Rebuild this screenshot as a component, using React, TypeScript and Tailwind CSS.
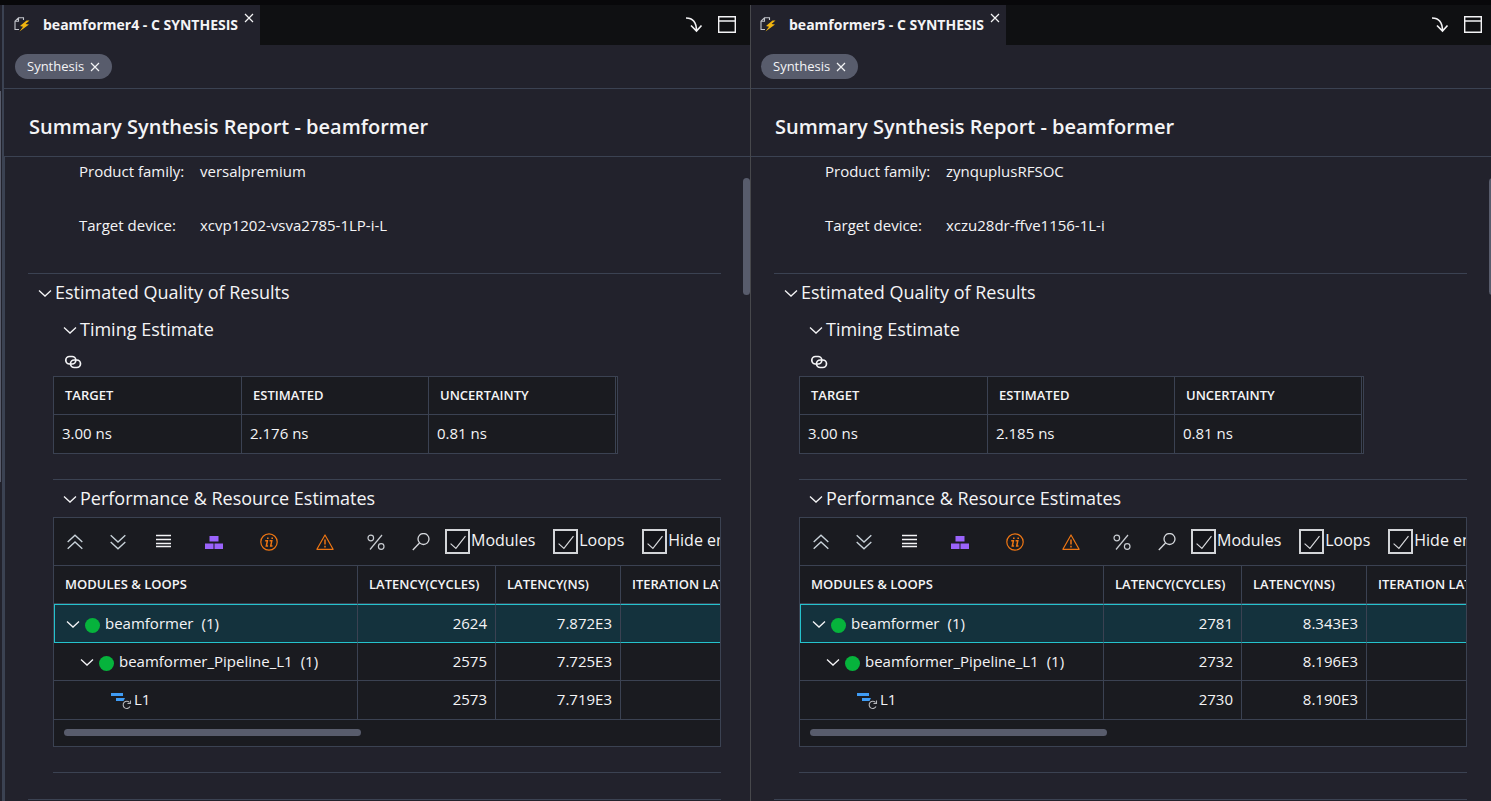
import { useState, type ReactNode } from 'react';

const LINE = 'border-[#3b4252]';

type Row = { name: string; count?: string; level: number; cycles: string; ns: string };
type Report = {
  id: string;
  tab: string;
  family: string;
  device: string;
  estimated: string;
  rows: Row[];
};

const reports: Report[] = [
  {
    id: 'b4',
    tab: 'beamformer4 - C SYNTHESIS',
    family: 'versalpremium',
    device: 'xcvp1202-vsva2785-1LP-i-L',
    estimated: '2.176 ns',
    rows: [
      { name: 'beamformer', count: '(1)', level: 0, cycles: '2624', ns: '7.872E3' },
      { name: 'beamformer_Pipeline_L1', count: '(1)', level: 1, cycles: '2575', ns: '7.725E3' },
      { name: 'L1', level: 2, cycles: '2573', ns: '7.719E3' },
    ],
  },
  {
    id: 'b5',
    tab: 'beamformer5 - C SYNTHESIS',
    family: 'zynquplusRFSOC',
    device: 'xczu28dr-ffve1156-1L-i',
    estimated: '2.185 ns',
    rows: [
      { name: 'beamformer', count: '(1)', level: 0, cycles: '2781', ns: '8.343E3' },
      { name: 'beamformer_Pipeline_L1', count: '(1)', level: 1, cycles: '2732', ns: '8.196E3' },
      { name: 'L1', level: 2, cycles: '2730', ns: '8.190E3' },
    ],
  },
];

function Icon({ children, className = '', size = 16, box = 16 }: { children: ReactNode; className?: string; size?: number; box?: number }) {
  return (
    <svg width={size} height={size} viewBox={`0 0 ${box} ${box}`} fill="none" stroke="currentColor" className={`shrink-0 ${className}`} aria-hidden="true">
      {children}
    </svg>
  );
}

const Close = ({ size = 10 }: { size?: number }) => (
  <Icon size={size} box={10}>
    <path d="M1 1l8 8M9 1l-8 8" strokeWidth="1.2" />
  </Icon>
);

const Chevron = () => (
  <Icon size={14} box={14}>
    <path d="M1 4.5l6 5.5 6-5.5" strokeWidth="1.3" />
  </Icon>
);

const FileBolt = () => (
  <Icon size={16}>
    <path d="M9.500 3V.8H4.500L1 4.200v8.300h4M4.500 .8v3.400H1" stroke="#c4c6cc" strokeWidth="1.100" />
    <path d="M12.500 3.500L6 9l3 .8L5.500 14.500 15 7.500l-3.500-.6L15.500 3.500z" fill="#f0b40f" stroke="none" />
  </Icon>
);

const LoopIcon = () => (
  <Icon size={22} box={22}>
    <path d="M1 4h12v3H1zM6 9h9l-1.500 3H6z" fill="#3f9cf5" stroke="none" />
    <path d="M19.500 13.500A3.600 3.600 0 1 0 20 17.500M20.500 11.500v3h-3" stroke="#b5b6ba" strokeWidth="1.100" />
  </Icon>
);

function Section({ title }: { title: string }) {
  return (
    <button className="flex h-[37px] items-center gap-[3px] text-[18px] leading-6">
      <Chevron />
      <span className="pb-0.5">{title}</span>
    </button>
  );
}

function Tool({ label, children, className }: { label: string; children: ReactNode; className?: string }) {
  return (
    <button aria-label={label} className={`flex h-6 shrink-0 items-center justify-center ${className ?? ''}`}>
      {children}
    </button>
  );
}

function Check({ id, label }: { id: string; label: string }) {
  const [on, setOn] = useState(true);
  return (
    <div className="flex shrink-0 items-center">
      <span className="grid size-[25px] place-items-center">
        <input
          id={id}
          type="checkbox"
          checked={on}
          onChange={() => setOn(!on)}
          className="col-start-1 row-start-1 size-[25px] appearance-none border-2 border-[#d3d5d8] bg-[#14151a]"
        />
        {on && (
          <Icon size={17} className="pointer-events-none col-start-1 row-start-1 text-[#d8d9dc]">
            <path d="M1.500 10l5 4.500L15.500 3" strokeWidth="1.100" />
          </Icon>
        )}
      </span>
      <label htmlFor={id} className="pb-[3px] pl-px text-[16px] leading-6 whitespace-nowrap">
        {label}
      </label>
    </div>
  );
}

function Toolbar({ id }: { id: string }) {
  return (
    <div className={`flex h-12 items-center overflow-hidden border-b ${LINE} pl-3`}>
      <Tool label="Collapse all" className="mr-[25px] w-[18px]">
        <Icon size={18} className="text-[#c9d3da]">
          <path d="M1.500 8L8 2l6.500 6M1.500 14L8 8l6.500 6" strokeWidth="1.200" />
        </Icon>
      </Tool>
      <Tool label="Expand all" className="mr-[29px] w-[18px]">
        <Icon size={18} className="text-[#c9d3da]">
          <path d="M1.500 2L8 8l6.500-6M1.500 8L8 14l6.500-6" strokeWidth="1.200" />
        </Icon>
      </Tool>
      <Tool label="Flat list" className="mr-[33px] w-4">
        <Icon size={16}>
          <path d="M0 1.500h15M0 5.500h15M0 9.500h15M0 12.500h15" strokeWidth="1.500" />
        </Icon>
      </Tool>
      <Tool label="Modules" className="mr-[37px] w-[18px]">
        <Icon size={18} box={18}>
          <path d="M4.500 3h9v5.500h-9zM0 10.500h8.500V16H0zM9.500 10.500H18V16H9.500z" fill="#9a63fb" stroke="none" />
        </Icon>
      </Tool>
      <Tool label="II violation" className="mr-[38px] w-[18px]">
        <Icon size={18} box={18} className="text-[#ee7613]">
          <circle cx="9" cy="9" r="8.200" strokeWidth="1.200" />
          <path d="M5.200 7.800h2.200L6.300 13h1.800M9.600 7.800h2.200L10.700 13h1.800" strokeWidth="1.500" />
          <path d="M7 4.500h1.600v1.600H7zM11.400 4.500H13v1.600h-1.600z" fill="currentColor" stroke="none" />
        </Icon>
      </Tool>
      <Tool label="Timing violation" className="mr-[33px] w-[18px]">
        <Icon size={18} box={18} className="text-[#ee7613]">
          <path d="M9 2L.9 16.300h16.200z" strokeWidth="1.200" strokeLinejoin="round" />
          <path d="M9 6.500v5M9 12.800v1.700" strokeWidth="1.500" />
        </Icon>
      </Tool>
      <Tool label="Percentage" className="mr-[27px] w-[18px]">
        <Icon size={18} box={18} className="text-[#c9cdd2]">
          <circle cx="3.800" cy="5" r="2.800" strokeWidth="1.200" />
          <circle cx="14.200" cy="13.500" r="2.800" strokeWidth="1.200" />
          <path d="M15 2L3 16.500" strokeWidth="1.200" />
        </Icon>
      </Tool>
      <Tool label="Search" className="mr-[15px] w-[18px]">
        <Icon size={18} box={18} className="text-[#d5d8dc]">
          <circle cx="11.500" cy="6" r="5.500" strokeWidth="1.300" />
          <path d="M7.500 10L.8 17" strokeWidth="1.300" />
        </Icon>
      </Tool>
      <div className="flex shrink-0 gap-[18px]">
        <Check id={`${id}-modules`} label="Modules" />
        <Check id={`${id}-loops`} label="Loops" />
        <Check id={`${id}-hide`} label="Hide empty columns" />
      </div>
    </div>
  );
}

const treeIndent = ['pl-[11px]', 'pl-[26px]', 'pl-14'];

function ModulesTable({ rows }: { rows: Row[] }) {
  const head = `h-[38px] border-b ${LINE} pb-0.5 text-left text-[13px] leading-5 font-semibold whitespace-nowrap`;
  return (
    <div className="overflow-hidden">
      <table className="w-[900px] table-fixed border-separate border-spacing-0">
        <colgroup>
          <col className="w-[304px]" />
          <col className="w-[138px]" />
          <col className="w-[125px]" />
          <col />
        </colgroup>
        <thead>
          <tr>
            <th className={`${head} border-r pl-[11px]`}>MODULES &amp; LOOPS</th>
            <th className={`${head} border-r pl-[11px]`}>LATENCY(CYCLES)</th>
            <th className={`${head} border-r pl-[11px]`}>LATENCY(NS)</th>
            <th className={`${head} pl-[11px]`}>ITERATION LATENCY</th>
          </tr>
        </thead>
        <tbody>
          {rows.map((r, i) => {
            const active = i === 0;
            const cell = `border-b border-r pb-0.5 ${active ? 'h-[39px] border-t border-y-[#25c3cd] border-r-[#3b4252] bg-[#14323d]' : `${LINE} ${i === 1 ? 'h-[38px]' : 'h-[39px]'}`}`;
            return (
              <tr key={r.name} className="text-[15px] leading-5">
                <td className={`${cell} ${active ? 'border-l border-l-[#25c3cd]' : ''}`}>
                  <div className={`flex items-center ${treeIndent[r.level]}`}>
                    {r.level < 2 ? (
                      <>
                        <button aria-label={`Collapse ${r.name}`} className="mt-0.5 mr-[5px]">
                          <Chevron />
                        </button>
                        <span className="mt-[5px] mr-[5px] size-[15px] rounded-full bg-[#06b33c]" />
                      </>
                    ) : (
                      <span className="mt-0.5 mr-0.5">
                        <LoopIcon />
                      </span>
                    )}
                    <span>{r.name}</span>
                    {r.count && <span className="ml-2">{r.count}</span>}
                  </div>
                </td>
                <td className={`${cell} pr-2 text-right`}>{r.cycles}</td>
                <td className={`${cell} pr-2 text-right`}>{r.ns}</td>
                <td className={cell} />
              </tr>
            );
          })}
        </tbody>
      </table>
    </div>
  );
}

function TimingTable({ estimated }: { estimated: string }) {
  const cols = [
    ['TARGET', '3.00 ns'],
    ['ESTIMATED', estimated],
    ['UNCERTAINTY', '0.81 ns'],
  ];
  return (
    <div className={`w-[565px] border ${LINE} bg-[#1a1b20] pr-px`}>
      <table className="w-full table-fixed border-separate border-spacing-0">
        <colgroup>
          <col className="w-[188px]" />
          <col className="w-[187px]" />
          <col />
        </colgroup>
        <thead>
          <tr>
            {cols.map(([h]) => (
              <th key={h} className={`h-[38px] border-r border-b ${LINE} pb-0.5 pl-[11px] text-left text-[13px] leading-5 font-semibold`}>
                {h}
              </th>
            ))}
          </tr>
        </thead>
        <tbody>
          <tr>
            {cols.map(([h, v]) => (
              <td key={h} className={`h-[38px] border-r ${LINE} pb-0.5 pl-2 text-[15px] leading-5`}>
                {v}
              </td>
            ))}
          </tr>
        </tbody>
      </table>
    </div>
  );
}

function Pane({ report, first }: { report: Report; first: boolean }) {
  return (
    <section className={`flex min-w-0 flex-col overflow-hidden bg-[#22222c] ${first ? '' : 'border-l border-[#47484c]'}`}>
      <div className="flex h-10 justify-between bg-[#0f1012]">
        <div className={`flex h-10 items-center bg-[#22222c] pr-[6px] ${first ? 'pl-[10px]' : 'pl-[9px]'}`}>
          <FileBolt />
          <span className="ml-[13px] text-[14px] leading-5 font-bold whitespace-nowrap">{report.tab}</span>
          <button aria-label={`Close ${report.tab}`} className="mb-[15px] ml-[6px]">
            <Close />
          </button>
        </div>
        <div className="flex items-center gap-[14px] pr-[14px]">
          <button aria-label="Move down">
            <Icon size={18} box={18}>
              <path d="M0 2c6 0 10.500 3.500 10.500 13M5 9.500l5.500 5.500 5-5.500" strokeWidth="1.600" />
            </Icon>
          </button>
          <button aria-label="Maximize">
            <Icon size={18} box={18}>
              <path d="M.7 .7h16.600v15.600H.7zM.7 5h16.600" strokeWidth="1.400" />
            </Icon>
          </button>
        </div>
      </div>

      <div className={`flex h-11 items-center border-b ${LINE} ${first ? 'pl-[11px]' : 'pl-[10px]'}`}>
        <span className="flex h-[25px] items-center gap-[6px] rounded-full bg-[#585c6c] px-3 text-[13px] leading-5">
          <span className="pb-0.5">Synthesis</span>
          <button aria-label="Remove Synthesis">
            <Close />
          </button>
        </span>
      </div>

      <h1 className={`flex h-[68px] items-center border-b ${LINE} pt-2 text-[20px] leading-7 font-semibold ${first ? 'pl-[25px]' : 'pl-6'}`}>
        Summary Synthesis Report - beamformer
      </h1>

      <div className={`flex min-h-0 flex-1 ${first ? `border-l ${LINE}` : ''}`}>
        <div className="min-w-0 flex-1 pr-[22px] pl-[23px]">
          <dl className={`grid grid-cols-[121px_1fr] gap-y-[34px] border-b ${LINE} pt-1 pb-[38px] pl-[51px] text-[15px] leading-5`}>
            <dt>Product family:</dt>
            <dd>{report.family}</dd>
            <dt>Target device:</dt>
            <dd>{report.device}</dd>
          </dl>

          <div className="pl-[10px]">
            <Section title="Estimated Quality of Results" />
          </div>

          <div className="pl-[25px]">
            <div className="pl-[10px]">
              <Section title="Timing Estimate" />
            </div>
            <button aria-label="Copy link" className="mt-[3px] mb-[3px] ml-[11px] flex h-[22px] items-center">
              <Icon size={18} box={18}>
                <rect x="1.800" y="3.500" width="10" height="7.500" rx="3.700" strokeWidth="1.700" />
                <rect x="6.500" y="7" width="10" height="7.500" rx="3.700" strokeWidth="1.700" />
              </Icon>
            </button>
            <TimingTable estimated={report.estimated} />

            <div className={`mt-[25px] border-t ${LINE} pl-[10px]`}>
              <Section title="Performance & Resource Estimates" />
            </div>
            <div className={`border ${LINE} bg-[#1a1b20]`}>
              <Toolbar id={report.id} />
              <ModulesTable rows={report.rows} />
              <div className="px-[10px] pt-[9px] pb-[10px]">
                <div className="h-[7px] w-[46%] rounded-full bg-[#585c6c]" />
              </div>
            </div>
            <div className={`mt-[25px] h-[27px] border-t ${LINE}`} />
          </div>
          <div className={`border-t ${LINE}`} />
        </div>
        <div className="mt-[21px] h-[117px] w-[7px] shrink-0 rounded-full bg-[#585c6c]" />
      </div>
    </section>
  );
}

export default function App() {
  return (
    <main className="flex h-screen flex-col overflow-hidden bg-[#08080a] pt-[5px] font-['Open_Sans','Noto_Sans',sans-serif] text-[#f4f4f6]">
      <div className="flex min-h-0 flex-1 overflow-hidden">
        <div className="w-1 shrink-0 border-r-2 border-[#3b4252] bg-[#22222c] pt-[86px]">
          <div className="h-[55%] w-px bg-[#585c6c]" />
        </div>
        <div className="-mr-[5px] grid min-w-0 flex-1 grid-cols-2">
          {reports.map((r, i) => (
            <Pane key={r.id} report={r} first={i === 0} />
          ))}
        </div>
      </div>
    </main>
  );
}
